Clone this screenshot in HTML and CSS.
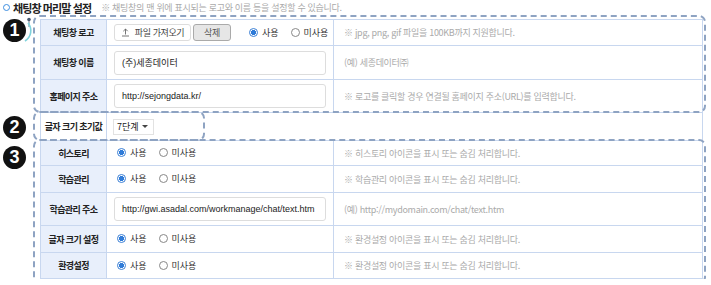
FILE: index.html
```html
<!DOCTYPE html>
<html lang="ko">
<head>
  <meta charset="UTF-8" />
  <title>채팅창 머리말 설정</title>
  <link rel="stylesheet" href="styles.css">
</head>
<body>

  <h2 class="title">
    <span class="title-dot"></span>
    <span class="title-text">채팅창 머리말 설정</span>
    <span class="title-desc">※ 채팅창의 맨 위에 표시되는 로고와 이름 등을 설정할 수 있습니다.</span>
  </h2>

  <div class="board">
    <table class="form">
      <colgroup>
        <col class="col-head">
        <col class="col-val">
        <col class="col-note">
      </colgroup>
      <tr class="h26">
        <th>채팅창 로고</th>
        <td>
          <div class="inline">
            <span class="btn btn-file">
              <svg width="9" height="9" viewBox="0 0 9 9"><path d="M4.5 6.5V1M2.3 3.2L4.5 1l2.2 2.2M1 8h7" fill="none" stroke="#666" stroke-width="0.9"/></svg>
              파일 가져오기
            </span>
            <span class="btn btn-del">삭제</span>
            <span class="radios">
              <label class="radio on"><i></i>사용</label>
              <label class="radio"><i></i>미사용</label>
            </span>
          </div>
        </td>
        <td class="note">※ jpg, png, gif 파일을 100KB까지 지원합니다.</td>
      </tr>
      <tr class="h34">
        <th>채팅창 이름</th>
        <td><div class="field">(주)세종데이터</div></td>
        <td class="note">(예) 세종데이터㈜</td>
      </tr>
      <tr class="h33">
        <th>홈페이지 주소</th>
        <td><div class="field">http://sejongdata.kr/</div></td>
        <td class="note">※ 로고를 클릭할 경우 연결될 홈페이지 주소(URL)를 입력합니다.</td>
      </tr>
      <tr class="h28 plain">
        <th class="wide">글자 크기 초기값</th>
        <td colspan="2"><span class="select">7단계<b></b></span></td>
      </tr>
      <tr class="h25">
        <th>히스토리</th>
        <td>
          <span class="radios">
            <label class="radio on"><i></i>사용</label>
            <label class="radio"><i></i>미사용</label>
          </span>
        </td>
        <td class="note">※ 히스토리 아이콘을 표시 또는 숨김 처리합니다.</td>
      </tr>
      <tr class="h27">
        <th>학습관리</th>
        <td>
          <span class="radios">
            <label class="radio on"><i></i>사용</label>
            <label class="radio"><i></i>미사용</label>
          </span>
        </td>
        <td class="note">※ 학습관리 아이콘을 표시 또는 숨김 처리합니다.</td>
      </tr>
      <tr class="h33">
        <th>학습관리 주소</th>
        <td><div class="field">http://gwi.asadal.com/workmanage/chat/text.htm</div></td>
        <td class="note">(예) http://mydomain.com/chat/text.htm</td>
      </tr>
      <tr class="h27">
        <th>글자 크기 설정</th>
        <td>
          <span class="radios">
            <label class="radio on"><i></i>사용</label>
            <label class="radio"><i></i>미사용</label>
          </span>
        </td>
        <td class="note">※ 환경설정 아이콘을 표시 또는 숨김 처리합니다.</td>
      </tr>
      <tr class="h26">
        <th>환경설정</th>
        <td>
          <span class="radios">
            <label class="radio on"><i></i>사용</label>
            <label class="radio"><i></i>미사용</label>
          </span>
        </td>
        <td class="note">※ 환경설정 아이콘을 표시 또는 숨김 처리합니다.</td>
      </tr>
    </table>

    <!-- 영역 표시 (점선 박스 + 번호) -->
    <div class="group group-1"></div>
    <div class="group group-2"></div>
    <div class="group group-3"></div>

    <span class="badge badge-1">1</span>
    <span class="badge badge-2">2</span>
    <span class="badge badge-3">3</span>
    <svg class="pointer" width="14" height="30" viewBox="0 0 14 30">
      <circle cx="10" cy="2.5" r="1.8" fill="#4a5a70"/>
      <path d="M10 3v7" stroke="#4a5a70" stroke-width="0.8"/>
      <path d="M9 6 A12 12 0 0 1 6 24" fill="none" stroke="#7fd3dc" stroke-width="1.6"/>
    </svg>
  </div>

</body>
</html>
```

FILE: styles.css
```css
* {
  box-sizing: border-box;
}

body {
  margin: 0;
  font-family: "Noto Sans CJK KR", "Noto Sans", sans-serif;
  font-size: 9px;
  color: #333;
  background: #fff;
}

/* 제목 */
.title {
  margin: 0;
  height: 19px;
  display: flex;
  align-items: center;
  padding: 0 0 4px 3px;
  font-weight: normal;
}

.title-dot {
  width: 7px;
  height: 7px;
  border: 1.5px solid #3d8ee0;
  border-radius: 50%;
  margin-right: 3px;
}

.title-text {
  font-size: 11px;
  font-weight: bold;
  letter-spacing: -0.9px;
  color: #222;
}

.title-desc {
  margin-left: 10px;
  font-size: 9px;
  letter-spacing: -0.3px;
  color: #aaa;
}

/* 표 */
.board {
  position: relative;
  padding-left: 40px;
}

.form {
  width: 663px;
  border-collapse: collapse;
  table-layout: fixed;
  border: 1px solid #b7c9e6;
}

.col-head { width: 66px; }
.col-val { width: 227px; }

.form th,
.form td {
  border: 1px solid #c8d7ef;
  padding: 0;
  vertical-align: middle;
}

.form th {
  background: #e8effb;
  font-weight: bold;
  letter-spacing: -0.6px;
  color: #222;
  text-align: center;
}

.form td {
  padding-left: 7px;
}

.form td.note {
  padding-left: 10px;
  color: #aaa;
  letter-spacing: -0.3px;
}

.plain th {
  background: #fff;
}

.h25 { height: 25px; }
.h26 { height: 26px; }
.h27 { height: 27px; }
.h28 { height: 28px; }
.h33 { height: 33px; }
.h34 { height: 34px; }

/* 입력 요소 */
.inline {
  display: flex;
  align-items: center;
}

.btn {
  height: 17px;
  display: inline-flex;
  align-items: center;
  justify-content: center;
  border-radius: 3px;
  letter-spacing: -0.4px;
}

.btn-file {
  width: 77px;
  gap: 5px;
  border: 1px solid #ddd;
  background: #fff;
  color: #444;
}

.btn-del {
  width: 38px;
  margin-left: 2px;
  border: 1px solid #aaa;
  background: #e6e6e6;
  color: #555;
}

.inline .radios {
  margin-left: 15px;
}

.radios {
  display: inline-flex;
  align-items: center;
  gap: 12px;
  padding-left: 3px;
}

.radio {
  display: inline-flex;
  align-items: center;
  gap: 4px;
  color: #333;
}

.radio i {
  width: 9px;
  height: 9px;
  border: 1px solid #888;
  border-radius: 50%;
  background: #fff;
}

.radio.on i {
  border-color: #3a7fd5;
  background: radial-gradient(circle, #2f7bd8 0 2.3px, #fff 2.8px);
}

.field {
  width: 212px;
  height: 24px;
  border: 1px solid #ddd;
  border-radius: 3px;
  padding-left: 7px;
  display: flex;
  align-items: center;
  font-family: "Liberation Sans", "Noto Sans CJK KR", sans-serif;
  font-size: 9px;
  color: #222;
  white-space: nowrap;
  overflow: hidden;
}

.select {
  width: 41px;
  height: 16px;
  display: inline-flex;
  align-items: center;
  justify-content: space-between;
  padding: 0 5px 0 3px;
  border: 1px solid #e2e2e2;
  margin-left: -1px;
  color: #222;
}

.select b {
  width: 0;
  height: 0;
  border-left: 3px solid transparent;
  border-right: 3px solid transparent;
  border-top: 3px solid #444;
}

/* 점선 영역 */
.group {
  position: absolute;
  border: 2px dashed #8ea3c2;
  border-radius: 7px;
  pointer-events: none;
}

.group-1 {
  left: 33px;
  top: -4px;
  width: 673px;
  height: 98px;
}

.group-2 {
  left: 33px;
  top: 92px;
  width: 172px;
  height: 30px;
}

.group-3 {
  left: 33px;
  top: 120px;
  width: 673px;
  height: 145px;
}

/* 번호 */
.badge {
  position: absolute;
  left: 3px;
  width: 23px;
  height: 23px;
  border-radius: 50%;
  background: #111;
  color: #fff;
  font-family: "Liberation Sans", sans-serif;
  font-size: 18px;
  font-weight: bold;
  display: flex;
  align-items: center;
  justify-content: center;
}

.badge-1 { top: 0; }
.badge-2 { top: 97px; }
.badge-3 { top: 127px; }

.pointer {
  position: absolute;
  left: 19px;
  top: -2px;
}
```
